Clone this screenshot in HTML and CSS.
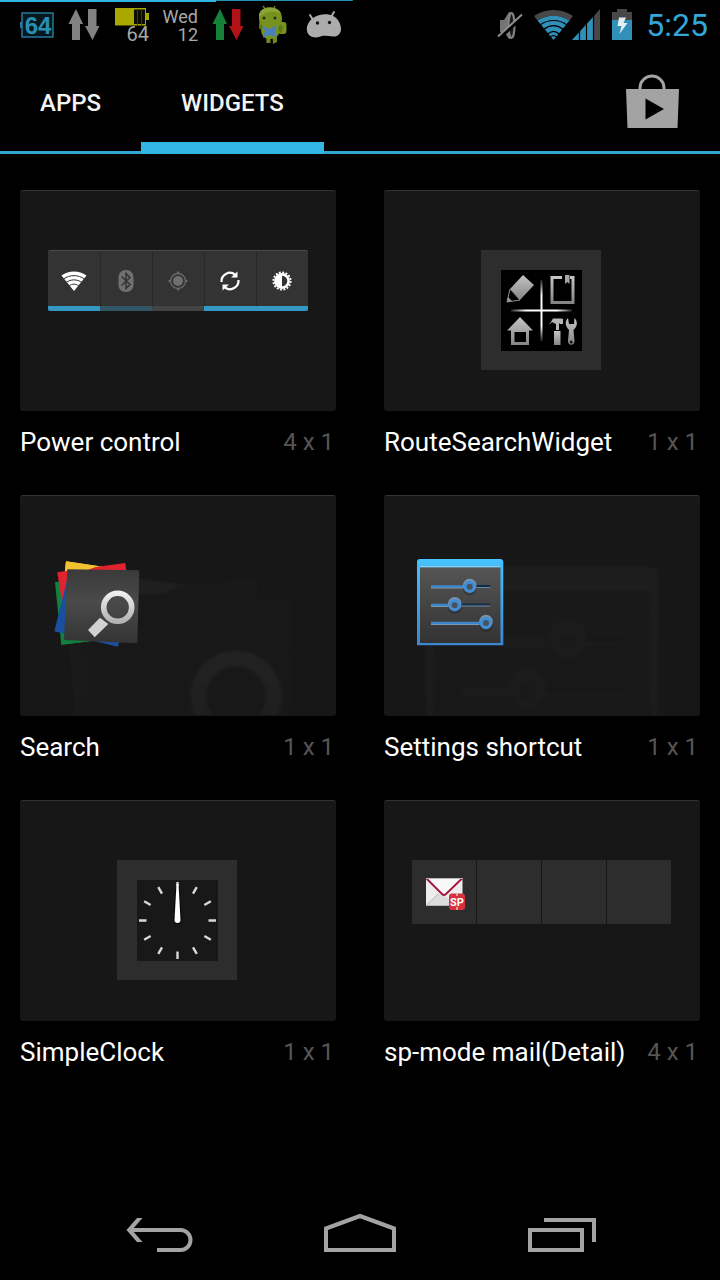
FILE: index.html
```html
<!DOCTYPE html>
<html lang="en">
<head>
  <meta charset="UTF-8" />
  <meta name="viewport" content="width=device-width, initial-scale=1.0" />
  <title>Widgets</title>
  <link rel="stylesheet" href="styles.css">
</head>
<body>

  <!-- status bar -->
  <div class="status-bar">
    <div class="status-left">
      <svg width="48" height="50" viewBox="0 0 48 50">
        <rect x="10" y="13" width="31" height="24" fill="#06171e" stroke="#24799a" stroke-width="1.5"/>
        <path d="M8 22h2v6h-2z" fill="#24799a"/>
        <text class="battery-num" x="26" y="34" text-anchor="middle">64</text>
      </svg>
      <svg width="48" height="50" viewBox="0 0 48 50" fill="#828282">
        <path d="M16 9L23 24H20V40H12V24H8.500Z"/>
        <path d="M28 9H36.500V26H39.500L32.500 40L25 26H28Z"/>
      </svg>
      <svg width="48" height="50" viewBox="0 0 48 50">
        <path d="M7 8H38V13H41V20H38V25.500H7Z" fill="#a8a800"/>
        <path d="M26 9.500H37V24H26Z" fill="#0c0c00"/>
        <path d="M29.500 9V25M33.500 9V25" stroke="#3c3c00"/>
        <text class="lcd" x="41" y="41" text-anchor="end">64</text>
      </svg>
      <div class="date"><span>Wed</span><span class="day">12</span></div>
      <svg width="48" height="50" viewBox="0 0 48 50">
        <path d="M16 9L23 24H20V40H12V24H8.500Z" fill="#168239"/>
        <path d="M28 9H36.500V26H39.500L32.500 40L25 26H28Z" fill="#b01218"/>
      </svg>
      <svg width="48" height="50" viewBox="0 0 48 50">
        <path d="M11 6l3 4M23 6l-2 4" stroke="#66801c" stroke-width="1.500"/>
        <rect x="26" y="22" width="8.500" height="12" rx="3" fill="#75911f"/>
        <path d="M14 36h4.500v7h-4zM20.500 36h4.500v6l-4 2z" fill="#6d891a"/>
        <path d="M7 17C7 10 12 7.500 18 7.500S30 11 30 18C30 23 28 25 28 29C28 35 24 39 18 39S9 35 9 29C8 25 7 22 7 17Z" fill="#78921f"/>
        <path d="M7 17C7 10 12 7.500 18 7.500C24 7.500 28 10 29 14C22 10 13 12 7 17Z" fill="#8aa537"/>
        <path d="M7 23l4 3-1 5-3-3zM28 24l3 3-2 6-3-3z" fill="#5c7713"/>
        <path d="M10 26l8 3 7-4-2 6 2 6-8-2-6 3 2-7z" fill="#4a7fbd"/>
        <circle cx="12" cy="18" r="1.500" fill="#28330c"/>
        <circle cx="23" cy="18" r="1.500" fill="#28330c"/>
      </svg>
      <svg width="48" height="50" viewBox="0 0 48 50">
        <path d="M10 15l3 5M34 12l-3 5" stroke="#acacac" stroke-width="2" stroke-linecap="round"/>
        <path d="M13 18C18 14 28 13 33 16C38 18 41 24 41 29C41 34 37 37 33 36.500C28 36 23 35 19 37C13 38.500 8 36 7 31C6 26 9 21 13 18Z" fill="#acacac"/>
        <circle cx="17.500" cy="23" r="1.700" fill="#111"/>
        <circle cx="29.500" cy="22.500" r="1.700" fill="#111"/>
      </svg>
    </div>
    <div class="status-right">
      <svg width="32" height="50" viewBox="0 0 32 50">
        <path d="M6 20H10L15 12C18 12 18.500 18 18.500 25.500S18 39 15 39L10 32H6Z" fill="#747474"/>
        <ellipse cx="17.500" cy="25.500" rx="3" ry="12.500" fill="#1a1a1a" stroke="#858585" stroke-width="2"/>
        <path d="M5 38L29 16" stroke="#000" stroke-width="4"/>
        <path d="M4 36.500L28 14.500" stroke="#8e8e8e" stroke-width="2"/>
      </svg>
      <svg class="wifi" width="40" height="50" viewBox="0 0 40 50">
        <path d="M0 16C11 8 28 8 39 16L35.500 20.500C25 14 14 14 3.500 20.500Z" fill="#484848"/>
        <path d="M3.500 20.500C14 14 25 14 35.500 20.500L19.500 40Z" fill="#3090b8"/>
        <path d="M6 25C14 19 25 19 33 25M9.500 29.500C16 24.500 23 24.500 29.500 29.500M13.500 34C18 30.500 21 30.500 25.500 34M16 37C18.500 35 20.500 35 23 37" fill="none" stroke="#000" stroke-width="1.200"/>
      </svg>
      <svg class="signal" width="28" height="50" viewBox="0 0 28 50">
        <path d="M0 40L21 17V40Z" fill="#3090b8"/>
        <path d="M22 16L28 9V40H22Z" fill="#484848"/>
        <path d="M7.500 28V40M14.500 22V40M21.500 15V40" stroke="#000" stroke-width="1.200"/>
      </svg>
      <svg class="battery" width="20" height="50" viewBox="0 0 20 50">
        <path d="M5 9H15V12H20V20H0V12H5Z" fill="#484848"/>
        <path d="M0 20H20V40H0Z" fill="#3090b8"/>
        <path d="M7 17.500H14L11.500 23H15.500L7.500 34L9.500 26H5.500Z" fill="#e4eef2"/>
      </svg>
      <span class="clock">5:25</span>
    </div>
  </div>

  <!-- tabs -->
  <header class="tabs">
    <button class="tab" type="button">APPS</button>
    <button class="tab tab-active" type="button">WIDGETS</button>
    <a class="store" href="#" aria-label="Play Store">
      <svg width="56" height="56" viewBox="0 0 56 56">
        <path d="M16 17V15a12 12 0 0 1 24 0V17" fill="none" stroke="#a3a3a3" stroke-width="3"/>
        <path d="M2 16H55L53.500 55H3.500Z" fill="#a3a3a3"/>
        <path d="M21.500 25.500V46.500L40 36Z" fill="#000"/>
      </svg>
    </a>
  </header>

  <main class="widgets">
    <div class="widget">
      <div class="preview">
        <div class="power">
          <div class="power-cell on">
            <svg width="30" height="30" viewBox="0 0 30 30">
              <path d="M2.500 9.500C10 4 20 4 27.500 9.500L15 25Z" fill="#fff"/>
              <path d="M4.500 13C11 8.500 19 8.500 25.500 13M7 16.500C12 13 18 13 23 16.500M10 20C13.500 17.500 16.500 17.500 20 20" fill="none" stroke="#333" stroke-width="1"/>
            </svg>
          </div>
          <div class="power-cell half">
            <svg width="30" height="30" viewBox="0 0 30 30">
              <rect x="7.500" y="4" width="15" height="22" rx="7" fill="#707070"/>
              <path d="M10.500 10.500L19 18.500L15 22.500V7.500L19 11.500L10.500 19.500" fill="none" stroke="#333" stroke-width="1.500"/>
            </svg>
          </div>
          <div class="power-cell">
            <svg width="30" height="30" viewBox="0 0 30 30">
              <circle cx="15" cy="15" r="7.500" fill="none" stroke="#6a6a6a" stroke-width="1.300"/>
              <circle cx="15" cy="15" r="5" fill="#707070"/>
              <path d="M15 5.500V8M15 22V24.500M5.500 15H8M22 15H24.500" stroke="#6a6a6a" stroke-width="2"/>
            </svg>
          </div>
          <div class="power-cell on">
            <svg width="30" height="30" viewBox="0 0 30 30">
              <path d="M6.500 16A8.500 8.500 0 0 1 20 8.500M23.500 14A8.500 8.500 0 0 1 10 21.500" fill="none" stroke="#fff" stroke-width="2.200"/>
              <path d="M22.500 5.500V11.500H16ZM7.500 24.500V18.500H14Z" fill="#fff"/>
            </svg>
          </div>
          <div class="power-cell on">
            <svg width="30" height="30" viewBox="0 0 30 30">
              <circle cx="15" cy="15" r="8.600" fill="none" stroke="#fff" stroke-width="2" stroke-dasharray="1.900 1.477"/>
              <circle cx="15" cy="15" r="6.600" fill="#333" stroke="#fff" stroke-width="2.600"/>
              <path d="M15 8A7 7 0 0 0 15 22Z" fill="#fff"/>
            </svg>
          </div>
        </div>
      </div>
      <div class="caption"><h2>Power control</h2><span>4 x 1</span></div>
    </div>

    <div class="widget">
      <div class="preview">
        <svg class="centered" width="120" height="120" viewBox="0 0 120 120">
          <defs>
            <linearGradient id="metal" x1="0" y1="0" x2="0" y2="1">
              <stop offset="0" stop-color="#c4c4c4"/>
              <stop offset="1" stop-color="#858585"/>
            </linearGradient>
            <linearGradient id="bar-h" x1="0" x2="1">
              <stop offset="0" stop-color="#222"/>
              <stop offset=".25" stop-color="#fff"/>
              <stop offset=".75" stop-color="#fff"/>
              <stop offset="1" stop-color="#222"/>
            </linearGradient>
            <linearGradient id="bar-v" x1="0" y1="0" x2="0" y2="1">
              <stop offset="0" stop-color="#222"/>
              <stop offset=".25" stop-color="#fff"/>
              <stop offset=".75" stop-color="#fff"/>
              <stop offset="1" stop-color="#222"/>
            </linearGradient>
          </defs>
          <path d="M0 0H120V120H0Z" fill="#2d2d2d"/>
          <path d="M20 20H101V101H20Z" fill="#000"/>
          <path d="M30 59.500H91V61.500H30Z" fill="url(#bar-h)"/>
          <path d="M59.500 30H61.500V91H59.500Z" fill="url(#bar-v)"/>
          <!-- pencil -->
          <path d="M42 25L53 35L39 50L29 39Z" fill="url(#metal)"/>
          <path d="M29 39L39 50L26 52Z" fill="#000" stroke="#8c8c8c"/>
          <path d="M26 52l1-5 4 4z" fill="#999"/>
          <!-- notebook -->
          <path d="M81 27.500H71V52.500H92V27.500H89" fill="none" stroke="url(#metal)" stroke-width="3"/>
          <path d="M84 25H88.500V34L86.200 32L84 34Z" fill="#a5a5a5"/>
          <!-- house -->
          <path d="M39 67L52 80.500H48V95H30V80.500H26ZM33.500 82V92H45V82Z" fill="url(#metal)" fill-rule="evenodd"/>
          <!-- tools -->
          <path d="M68 75L72 68.500H80L82 69V74H79L78 73V80H75V74L71 72Z" fill="#b5b5b5"/>
          <path d="M73 81H79.500V95H73Z" fill="url(#metal)"/>
          <path d="M87 68C83 72 85 77 88 80L87 91C87 96 93.500 96 93.500 91L92.500 80C96 77 97.500 72 93.500 68L93 74H88Z" fill="url(#metal)"/>
          <circle cx="90.200" cy="92" r="1.500" fill="#111"/>
        </svg>
      </div>
      <div class="caption"><h2>RouteSearchWidget</h2><span>1 x 1</span></div>
    </div>

    <div class="widget">
      <div class="preview">
        <svg width="288" height="160" viewBox="0 0 288 160">
          <defs>
            <linearGradient id="plate" x1="0" y1="0" x2="0" y2="1">
              <stop offset="0" stop-color="#3a3a3a"/>
              <stop offset=".45" stop-color="#4a4a4a"/>
              <stop offset="1" stop-color="#343434"/>
            </linearGradient>
            <linearGradient id="glass" x1="0" y1="0" x2="0" y2="1">
              <stop offset="0" stop-color="#eee"/>
              <stop offset="1" stop-color="#b4b4b4"/>
            </linearGradient>
            <symbol id="search-icon" viewBox="0 0 96 96">
              <path d="M7 27L13.300 89.700L60 84L50 24Z" fill="#12813f"/>
              <path d="M18 6.300L70 14L60 40L16 24Z" fill="#f2c231"/>
              <path d="M9.300 17.300L77.300 8L80 30L16 60Z" fill="#e0242f"/>
              <path d="M18 6.300L50 11L40 15H17Z" fill="#f2c231"/>
              <path d="M19.300 24L6.300 76.300L69.700 91.700L80 60Z" fill="#1a4fa0"/>
              <path d="M13 86L13.300 89.700L48 85.500L40 82Z" fill="#12813f"/>
              <path d="M19.300 14.300L91.300 15.300L89.300 88.300L16 85Z" fill="url(#plate)"/>
              <path d="M52 62.700L60.300 69L46.700 82.300L40 75Z" fill="#d2d2d2"/>
              <circle cx="69.700" cy="52.300" r="14" fill="none" stroke="url(#glass)" stroke-width="5.600"/>
            </symbol>
          </defs>
          <use class="ghost" href="#search-icon" width="259" height="259"/>
          <use href="#search-icon" width="96" height="96"/>
        </svg>
      </div>
      <div class="caption"><h2>Search</h2><span>1 x 1</span></div>
    </div>

    <div class="widget">
      <div class="preview">
        <svg width="288" height="160" viewBox="0 0 288 160">
          <defs>
            <linearGradient id="frame" x1="0" y1="0" x2="0" y2="1">
              <stop offset="0" stop-color="#45c3ff"/>
              <stop offset="1" stop-color="#3c86cf"/>
            </linearGradient>
            <linearGradient id="panel" x1="0" y1="0" x2="0" y2="1">
              <stop offset="0" stop-color="#555"/>
              <stop offset="1" stop-color="#333"/>
            </linearGradient>
            <symbol id="settings-icon" viewBox="0 0 96 96">
              <path d="M5 90.300V7Q5 4 8 4H88Q91.300 4 91.300 7V90.300Z" fill="url(#frame)"/>
              <path d="M8 12.500H88.500V88H8Z" fill="url(#panel)"/>
              <path d="M8 11.500H88.500" stroke="#9ccbe6" stroke-width="1.200"/>
              <path d="M57 31H78M42 49.500H78" stroke="#0f2c49" stroke-width="2"/>
              <path d="M57 32.500H78M42 51H78" stroke="#6e87a0"/>
              <path d="M19 31.500H57M19 50H42M19 68H74" stroke="#3a86cc" stroke-width="2.600"/>
              <path d="M19 33H52M19 51.500H37M19 69.500H69" stroke="#8eabc8" stroke-width=".8"/>
              <g fill="#333" stroke="#222" stroke-opacity=".4" stroke-width="5">
                <circle cx="57.700" cy="33.500" r="4.500"/>
                <circle cx="42.700" cy="52" r="4.500"/>
                <circle cx="74" cy="70" r="4.500"/>
              </g>
              <g fill="#4a5258" stroke="#7c93aa" stroke-width="4">
                <circle cx="57.700" cy="30.500" r="4.800"/>
                <circle cx="42.700" cy="48.900" r="4.800"/>
                <circle cx="74" cy="66.500" r="4.800"/>
              </g>
              <g fill="#4a5258" stroke="#3f8fd8" stroke-width="3.200">
                <circle cx="57.700" cy="31.800" r="4.600"/>
                <circle cx="42.700" cy="50.200" r="4.600"/>
                <circle cx="74" cy="68" r="4.600"/>
              </g>
            </symbol>
          </defs>
          <use class="ghost ghost-faint" href="#settings-icon" y="1" width="259" height="259"/>
          <use href="#settings-icon" width="96" height="96"/>
        </svg>
      </div>
      <div class="caption"><h2>Settings shortcut</h2><span>1 x 1</span></div>
    </div>

    <div class="widget">
      <div class="preview">
        <svg class="centered" width="120" height="120" viewBox="0 0 120 120">
          <path d="M0 0H120V120H0Z" fill="#2d2d2d"/>
          <path d="M20 20H101V101H20Z" fill="#181818"/>
          <g stroke="#d8d8d8" stroke-width="2.400">
            <path id="tick" d="M60.500 91.500V99"/>
            <use href="#tick" transform="rotate(30 60.500 60.500)"/>
            <use href="#tick" transform="rotate(60 60.500 60.500)"/>
            <use href="#tick" transform="rotate(90 60.500 60.500)"/>
            <use href="#tick" transform="rotate(120 60.500 60.500)"/>
            <use href="#tick" transform="rotate(150 60.500 60.500)"/>
            <use href="#tick" transform="rotate(180 60.500 60.500)"/>
            <use href="#tick" transform="rotate(210 60.500 60.500)"/>
            <use href="#tick" transform="rotate(240 60.500 60.500)"/>
            <use href="#tick" transform="rotate(270 60.500 60.500)"/>
            <use href="#tick" transform="rotate(300 60.500 60.500)"/>
            <use href="#tick" transform="rotate(330 60.500 60.500)"/>
          </g>
          <path d="M58.500 26H62.500L65 60A4.500 4.500 0 0 1 56 60Z" fill="#0c0c0c"/>
          <path d="M59.500 24H61.500L63.500 60A3 3 0 0 1 57.500 60Z" fill="#fff"/>
        </svg>
      </div>
      <div class="caption"><h2>SimpleClock</h2><span>1 x 1</span></div>
    </div>

    <div class="widget">
      <div class="preview">
        <div class="mail">
          <div class="mail-cell">
            <svg width="64" height="64" viewBox="0 0 64 64">
              <path d="M14 18H50.500V45.500H14Z" fill="#ededed"/>
              <path d="M14 45.500L27 33L32 36L50 45.500Z" fill="#dcdcdc"/>
              <path d="M14.500 45L26 34" stroke="#bbb"/>
              <path d="M14.500 18.500L30 34Q32 36 34 34L50 18.500" fill="#f8f8f8" stroke="#a8143c" stroke-width="1.800"/>
              <path d="M14 18.500H50.500" stroke="#b8b8b8"/>
              <rect x="37" y="33.500" width="16" height="16.500" rx="3" fill="#d4323c"/>
              <path d="M45 33.500V36M45 47V50" stroke="#fff"/>
              <text class="sp" x="45" y="46" text-anchor="middle">SP</text>
            </svg>
          </div>
          <div class="mail-cell"></div>
          <div class="mail-cell"></div>
          <div class="mail-cell"></div>
        </div>
      </div>
      <div class="caption"><h2>sp-mode mail(Detail)</h2><span>4 x 1</span></div>
    </div>
  </main>

  <nav class="nav-bar">
    <button type="button" aria-label="Back">
      <svg width="80" height="48" viewBox="0 0 80 48">
        <path d="M37 40H60.500a10 10 0 0 0 0-20H11" />
        <path d="M6.500 20L17 8H22.500L12 20L22.500 32H17Z" class="solid"/>
      </svg>
    </button>
    <button type="button" aria-label="Home">
      <svg width="80" height="48" viewBox="0 0 80 48"><path d="M6 40V18.500L40 6L74 18.500V40Z"/></svg>
    </button>
    <button type="button" aria-label="Recent apps">
      <svg width="80" height="48" viewBox="0 0 80 48"><path d="M10 20H62V40H10ZM24 10H74V32"/></svg>
    </button>
  </nav>

</body>
</html>
```
FILE: styles.css
```css
*,
*::before,
*::after {
  box-sizing: border-box;
}

body {
  margin: 0;
  min-height: 100vh;
  display: flex;
  flex-direction: column;
  background: #000;
  color: #fff;
  font-family: Roboto, "Noto Sans", sans-serif;
}

svg {
  display: block;
  flex-shrink: 0;
}

button {
  margin: 0;
  padding: 0;
  border: 0;
  background: none;
  color: inherit;
  font: inherit;
}

/* status bar */
.status-bar {
  display: flex;
  justify-content: space-between;
  height: 50px;
  padding: 0 12px;
  background:
    linear-gradient(#33b5e5, #33b5e5) 0 0 / 30% 2px no-repeat,
    linear-gradient(#2a8fb5, #2a8fb5) 0 0 / 49% 1px no-repeat;
}

.status-left,
.status-right {
  display: flex;
}

.battery-num {
  font: bold 24px "Liberation Sans", sans-serif;
  fill: #2b8fb5;
}

.lcd {
  font-size: 20px;
  fill: #a8a8a8;
}

.date {
  width: 48px;
  padding: 6px 6px 0 0;
  display: flex;
  flex-direction: column;
  align-items: flex-end;
  font-size: 18px;
  line-height: 21px;
  color: #a8a8a8;
}

.date .day {
  line-height: 16px;
}

.status-right .wifi {
  margin-left: 8px;
}

.status-right .signal {
  margin-left: -2px;
}

.status-right .battery {
  margin: 0 14px 0 12px;
}

.clock {
  font-size: 32px;
  line-height: 50px;
  color: #33a7d8;
}

/* tabs */
.tabs {
  display: flex;
  height: 104px;
  box-shadow: inset 0 -3px #33a5d3;
}

.tab {
  padding: 2px 40px 0;
  border-top: 12px solid transparent;
  border-bottom: 12px solid transparent;
  font-size: 24px;
  font-weight: 500;
  color: #f3f3f3;
}

.tab-active {
  border-bottom-color: #33b5e5;
}

.store {
  margin: 23px 40px 0 auto;
}

/* widget grid */
.widgets {
  flex: 1;
  display: grid;
  grid-template-columns: 1fr 1fr;
  align-content: start;
  gap: 38px 48px;
  padding: 36px 20px;
}

.widget {
  min-width: 0;
}

.preview {
  height: 221px;
  padding: 59px 30px 0 28px;
  overflow: hidden;
  background: #171717;
  border-top: 1px solid #333;
  border-radius: 3px;
}

.centered {
  margin: 0 auto;
}

.ghost {
  filter: grayscale(1) blur(1px);
  opacity: .05;
}

.ghost-faint {
  opacity: .04;
}

.caption {
  display: flex;
  justify-content: space-between;
  padding-top: 16px;
  line-height: 30px;
}

.caption h2 {
  margin: 0;
  font-size: 26px;
  font-weight: 400;
  white-space: nowrap;
}

.caption span {
  padding-right: 2px;
  font-size: 24px;
  color: #555;
  white-space: nowrap;
}

/* power control */
.power {
  display: flex;
  width: 260px;
  height: 61px;
  overflow: hidden;
  background: #333;
  border-top: 1px solid #4a4a4a;
  border-radius: 2px;
}

.power-cell {
  flex: 1;
  display: flex;
  justify-content: center;
  align-items: center;
  padding-top: 4px;
  border-bottom: 5px solid #444;
}

.power-cell + .power-cell {
  box-shadow: inset 1px 0 #272727;
}

.power-cell.on {
  border-bottom-color: #3399c4;
}

.power-cell.half {
  border-bottom-color: #335666;
}

/* mail */
.mail {
  display: flex;
  gap: 1px;
}

.mail-cell {
  flex: 0 0 64px;
  height: 64px;
  background: #2d2d2d;
}

.sp {
  font-size: 11px;
  font-weight: 700;
  fill: #fff;
}

/* navigation */
.nav-bar {
  display: flex;
  height: 92px;
  padding: 0 60px;
}

.nav-bar button {
  flex: 1;
  display: flex;
  justify-content: center;
  align-items: center;
}

.nav-bar path {
  fill: none;
  stroke: #a3a3a3;
  stroke-width: 4;
}

.nav-bar .solid {
  fill: #a3a3a3;
  stroke: none;
}
```
